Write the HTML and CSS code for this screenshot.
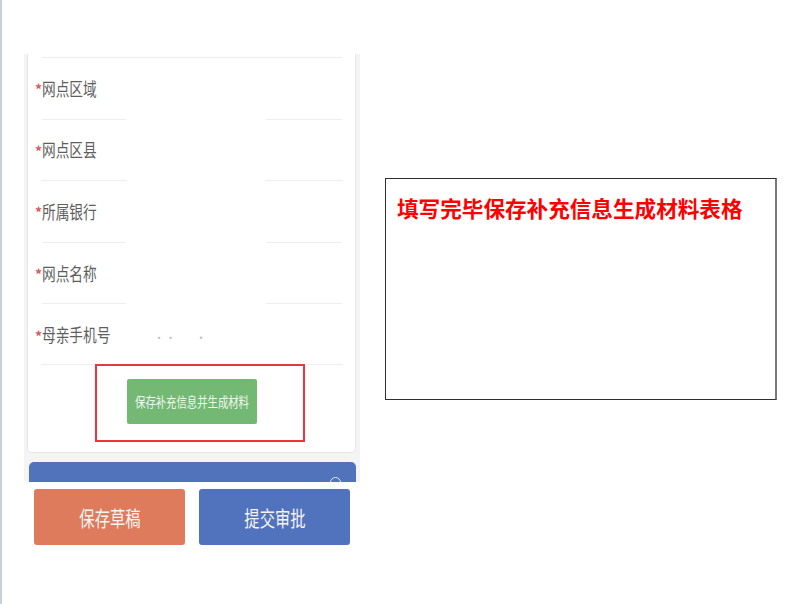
FILE: index.html
```html
<!DOCTYPE html>
<html lang="zh-CN">
<head>
    <meta charset="UTF-8">
    <meta name="viewport" content="width=device-width, initial-scale=1.0">
    <title>补充信息</title>
    <link rel="stylesheet" href="styles.css">
</head>
<body>
    <div class="slide">
        <div class="mobile">
            <div class="screen">
                <div class="card">
                    <div class="row line-full">
                        <span class="req">*</span><span class="label">网点区域</span>
                    </div>
                    <div class="row line-gap">
                        <span class="req">*</span><span class="label">网点区县</span>
                    </div>
                    <div class="row line-gap">
                        <span class="req">*</span><span class="label">所属银行</span>
                    </div>
                    <div class="row line-gap">
                        <span class="req">*</span><span class="label">网点名称</span>
                    </div>
                    <div class="row line-gap">
                        <span class="req">*</span><span class="label">母亲手机号</span>
                        <span class="masked">˙&nbsp;&nbsp;˙&nbsp;&nbsp;&nbsp;&nbsp;&nbsp;&nbsp;&nbsp;&nbsp;·</span>
                    </div>
                    <div class="gen line-full">
                        <div class="mark">
                            <a href="#" class="btn-gen"><span class="txt">保存补充信息并生成材料</span></a>
                        </div>
                    </div>
                </div>
                <div class="tabbar">
                    <span class="ring"></span>
                </div>
            </div>
            <div class="actions">
                <a href="#" class="btn btn-draft"><span class="txt">保存草稿</span></a>
                <a href="#" class="btn btn-submit"><span class="txt">提交审批</span></a>
            </div>
        </div>

        <div class="note">
            <h3>填写完毕保存补充信息生成材料表格</h3>
        </div>
    </div>
</body>
</html>
```

FILE: styles.css
```css
*{
    box-sizing: border-box;
}

body{
    margin: 0;
    background-color: #fff;
    font-family: "Noto Sans CJK SC", "Noto Sans", sans-serif;
}

a{
    text-decoration: none;
}

.slide{
    width: 791px;
    height: 604px;
    border-left: 2px solid #c9d1d9;
    display: flex;
    align-items: flex-start;
    overflow: hidden;
}

/* phone screenshot */
.mobile{
    width: 336px;
    margin: 54px 0 0 22px;
}

.screen{
    background-color: #f4f4f4;
    padding: 0 4px 0 3px;
}

.card{
    background-color: #fff;
    border: 1px solid #e6e6e6;
    border-top: none;
    border-radius: 0 0 5px 5px;
    padding-top: 3px;
}

.row{
    height: 61.6px;
    margin: 0 13px 0 14px;
    display: flex;
    align-items: center;
}

.line-full{
    background: linear-gradient(#eeeeee, #eeeeee) top / 100% 1px no-repeat;
}

.line-gap{
    background: linear-gradient(to right, #eeeeee 84px, transparent 84px, transparent 224px, #eeeeee 224px) top / 100% 1px no-repeat;
}

.req{
    width: 7px;
    margin-left: -7px;
    margin-top: 3px;
    color: #d45c5c;
    font-size: 14px;
    font-weight: 700;
}

.label{
    display: inline-block;
    font-size: 18px;
    color: #5e5e5e;
    transform: scaleX(.76);
    transform-origin: left center;
    white-space: nowrap;
}

.masked{
    margin-left: 24px;
    margin-top: 6px;
    color: #c4c4c4;
    font-size: 12px;
    white-space: pre;
}

.gen{
    margin: 0 13px 0 14px;
    padding-bottom: 10px;
}

.mark{
    width: 210px;
    height: 78px;
    margin: -1px 0 0 53px;
    border: 2px solid #ec3540;
    padding: 13px 0 0 30px;
}

.btn-gen{
    width: 130px;
    height: 45px;
    background-color: #73b973;
    border-radius: 2px;
    display: flex;
    align-items: center;
    justify-content: center;
    color: #f2f7f0;
}

.btn-gen .txt{
    display: inline-block;
    font-size: 14px;
    white-space: nowrap;
    transform: scaleX(.74);
}

.tabbar{
    height: 20px;
    margin-top: 9px;
    margin-left: 2px;
    background-color: #5073bb;
    border-radius: 5px 5px 0 0;
    display: flex;
    justify-content: flex-end;
    padding: 15px 15px 0 0;
    overflow: hidden;
}

.ring{
    width: 11px;
    height: 11px;
    flex: none;
    border: 1.5px solid #dfe6f3;
    border-radius: 50%;
}

.actions{
    display: flex;
    gap: 14px;
    padding: 7px 0 0 10px;
}

.btn{
    width: 151px;
    height: 56px;
    border-radius: 3px;
    display: flex;
    align-items: center;
    justify-content: center;
    color: #f4f4f4;
}

.btn .txt{
    display: inline-block;
    font-size: 21px;
    white-space: nowrap;
    transform: scaleX(.73);
}

.btn-draft{
    background-color: #dd7b5c;
}

.btn-submit{
    background-color: #5173bd;
}

/* annotation box */
.note{
    width: 392px;
    height: 222px;
    margin: 178px 0 0 25px;
    background-color: #fff;
    border: 1px solid #2e2e2e;
    border-right: 2px solid #777;
    padding: 18px 0 0 11px;
}

.note h3{
    margin: 0;
    font-size: 21.6px;
    line-height: 1;
    font-weight: 700;
    color: #ff0000;
    white-space: nowrap;
}
```
